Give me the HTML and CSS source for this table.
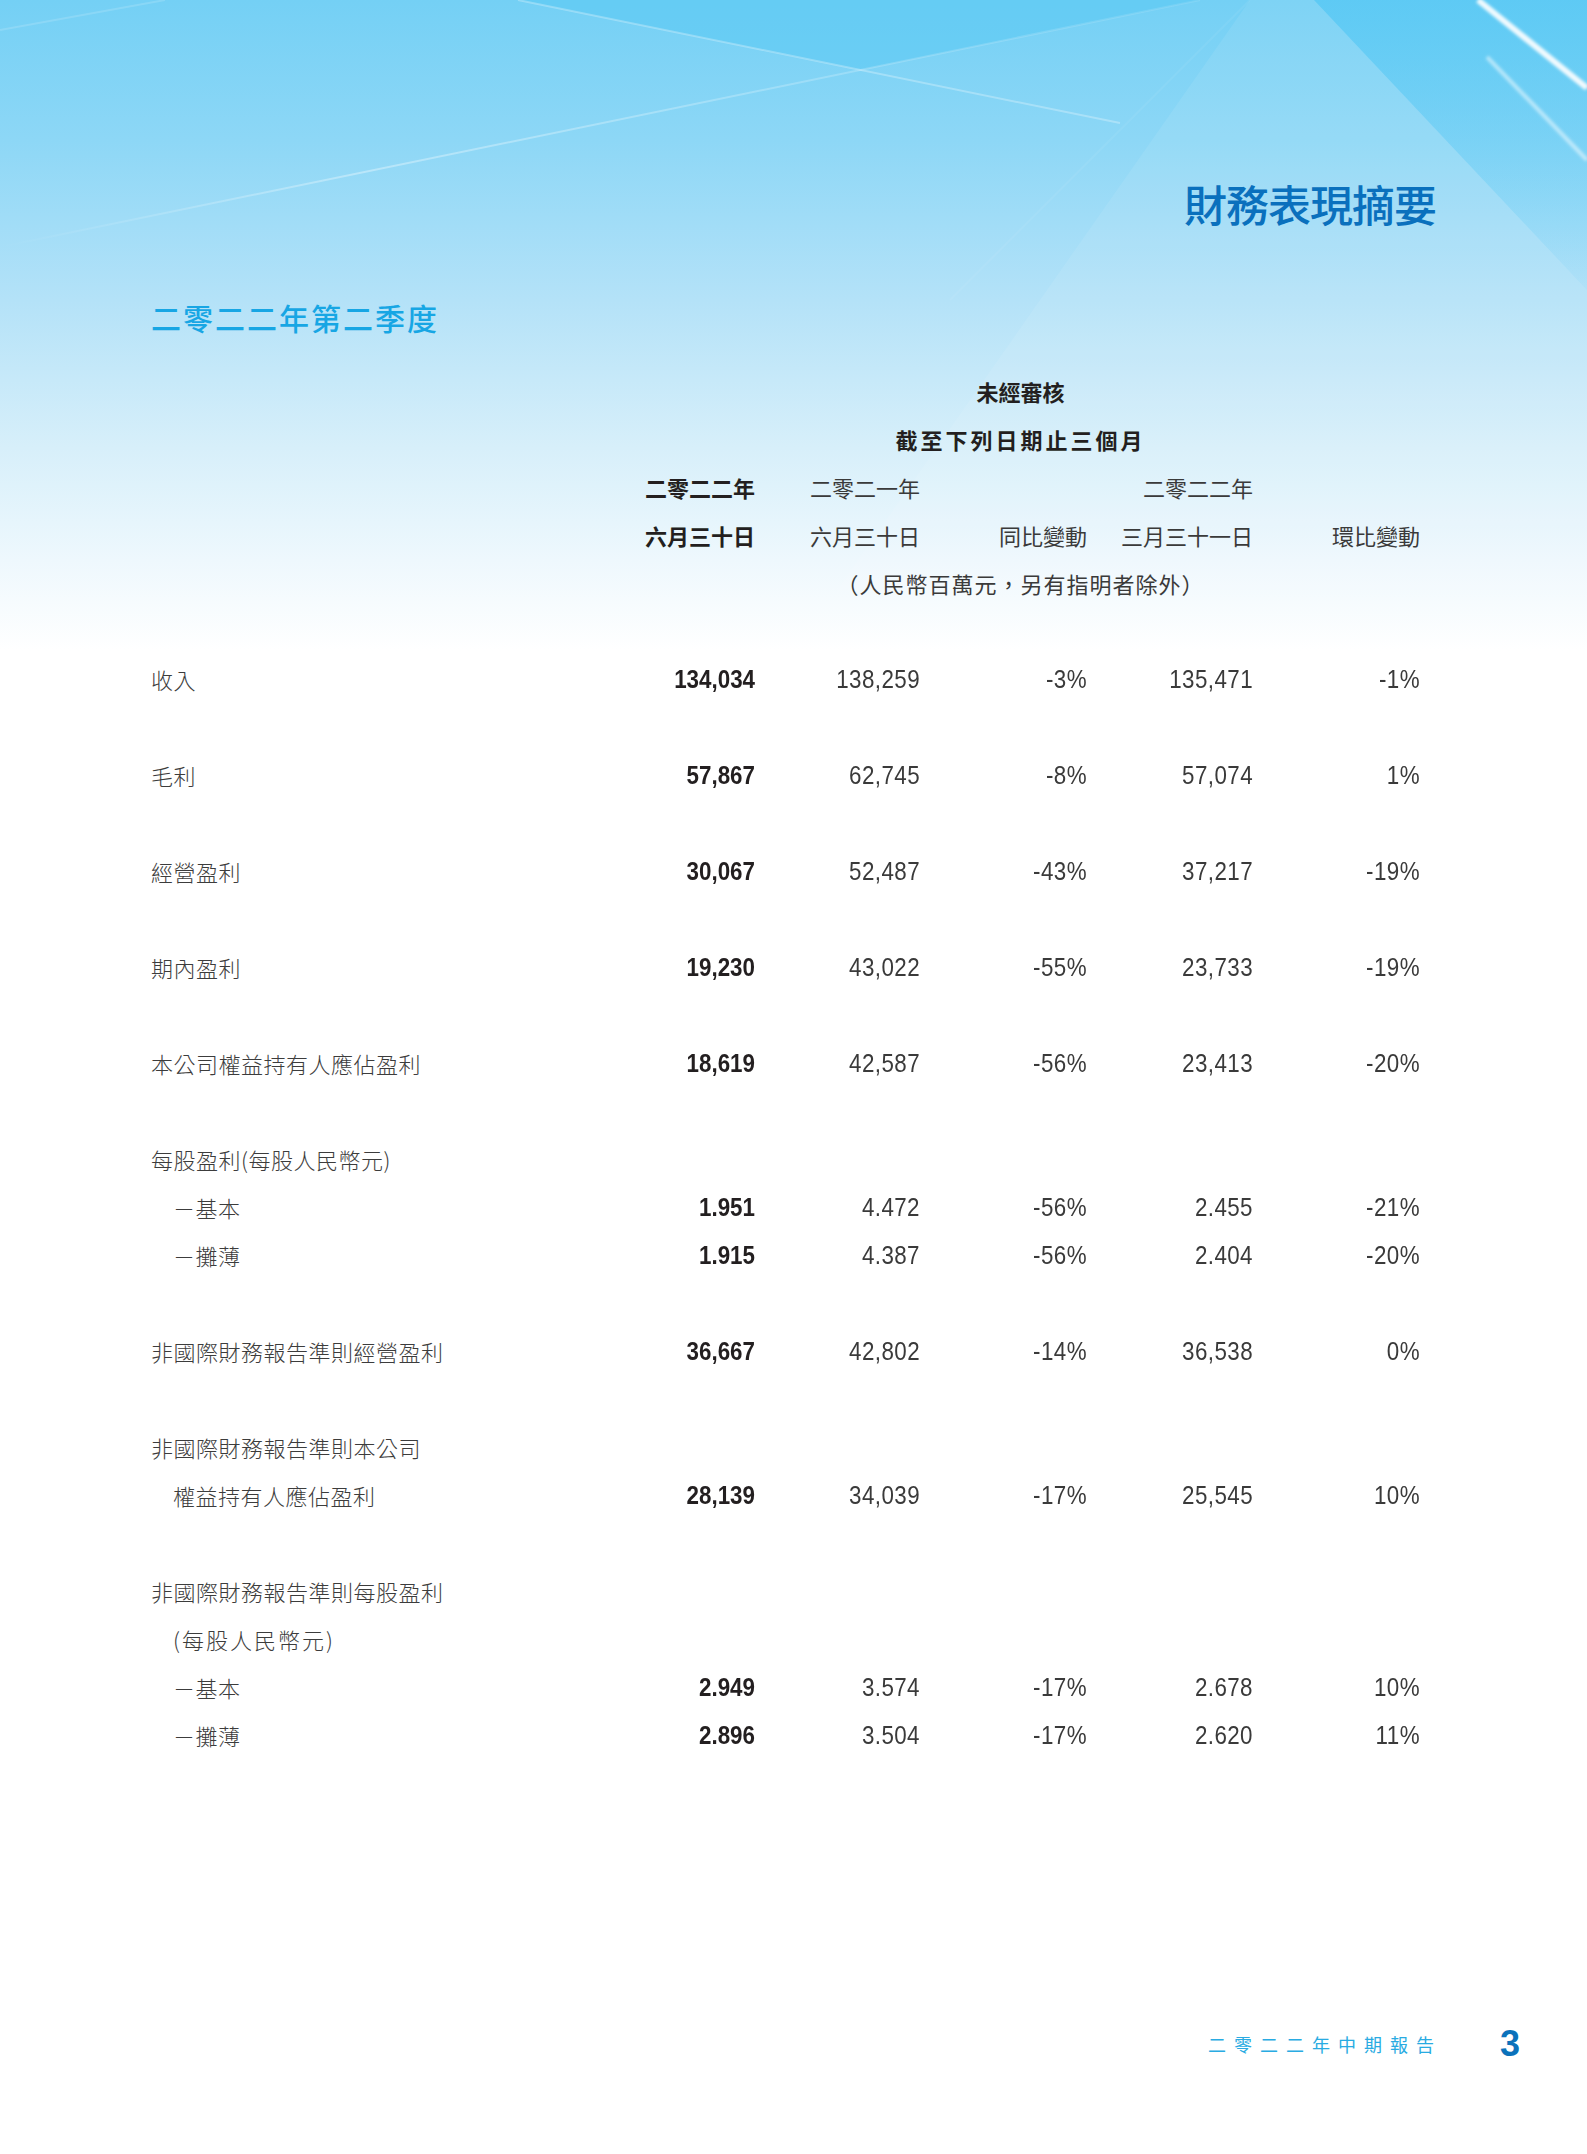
FILE: index.html
```html
<!DOCTYPE html>
<html lang="zh-Hant">
<head>
<meta charset="utf-8">
<title>財務表現摘要</title>
<link rel="stylesheet" href="styles.css">
</head>
<body>
<div class="page">
  <header class="head">
    <h1 class="title">財務表現摘要</h1>
    <h2 class="subtitle">二零二二年第二季度</h2>
  </header>

  <section class="table">
    <div class="row"><div class="span-head strong">未經審核</div></div>
    <div class="row"><div class="span-head strong wide">截至下列日期止三個月</div></div>
    <div class="row">
      <div></div><div class="hd strong">二零二二年</div><div class="hd">二零二一年</div><div></div><div class="hd">二零二二年</div><div></div>
    </div>
    <div class="row">
      <div></div><div class="hd strong">六月三十日</div><div class="hd">六月三十日</div><div class="hd">同比變動</div><div class="hd">三月三十一日</div><div class="hd">環比變動</div>
    </div>
    <div class="row"><div class="span-head unit">（人民幣百萬元，另有指明者除外）</div></div>
    <div class="gap"></div>

    <div class="row"><div class="lbl">收入</div><div class="num b">134,034</div><div class="num">138,259</div><div class="num">-3%</div><div class="num">135,471</div><div class="num">-1%</div></div>
    <div class="gap"></div>
    <div class="row"><div class="lbl">毛利</div><div class="num b">57,867</div><div class="num">62,745</div><div class="num">-8%</div><div class="num">57,074</div><div class="num">1%</div></div>
    <div class="gap"></div>
    <div class="row"><div class="lbl">經營盈利</div><div class="num b">30,067</div><div class="num">52,487</div><div class="num">-43%</div><div class="num">37,217</div><div class="num">-19%</div></div>
    <div class="gap"></div>
    <div class="row"><div class="lbl">期內盈利</div><div class="num b">19,230</div><div class="num">43,022</div><div class="num">-55%</div><div class="num">23,733</div><div class="num">-19%</div></div>
    <div class="gap"></div>
    <div class="row"><div class="lbl">本公司權益持有人應佔盈利</div><div class="num b">18,619</div><div class="num">42,587</div><div class="num">-56%</div><div class="num">23,413</div><div class="num">-20%</div></div>
    <div class="gap"></div>
    <div class="row"><div class="lbl full">每股盈利(每股人民幣元)</div></div>
    <div class="row"><div class="lbl sub">－基本</div><div class="num b">1.951</div><div class="num">4.472</div><div class="num">-56%</div><div class="num">2.455</div><div class="num">-21%</div></div>
    <div class="row"><div class="lbl sub">－攤薄</div><div class="num b">1.915</div><div class="num">4.387</div><div class="num">-56%</div><div class="num">2.404</div><div class="num">-20%</div></div>
    <div class="gap"></div>
    <div class="row"><div class="lbl">非國際財務報告準則經營盈利</div><div class="num b">36,667</div><div class="num">42,802</div><div class="num">-14%</div><div class="num">36,538</div><div class="num">0%</div></div>
    <div class="gap"></div>
    <div class="row"><div class="lbl full">非國際財務報告準則本公司</div></div>
    <div class="row"><div class="lbl sub">權益持有人應佔盈利</div><div class="num b">28,139</div><div class="num">34,039</div><div class="num">-17%</div><div class="num">25,545</div><div class="num">10%</div></div>
    <div class="gap"></div>
    <div class="row"><div class="lbl full">非國際財務報告準則每股盈利</div></div>
    <div class="row"><div class="lbl full sub paren">(每股人民幣元)</div></div>
    <div class="row"><div class="lbl sub">－基本</div><div class="num b">2.949</div><div class="num">3.574</div><div class="num">-17%</div><div class="num">2.678</div><div class="num">10%</div></div>
    <div class="row"><div class="lbl sub">－攤薄</div><div class="num b">2.896</div><div class="num">3.504</div><div class="num">-17%</div><div class="num">2.620</div><div class="num">11%</div></div>
  </section>

  <footer class="foot">
    <span class="foot-text">二零二二年中期報告</span>
    <span class="page-num">3</span>
  </footer>
</div>
</body>
</html>
```

FILE: styles.css
```css
html, body {
  margin: 0;
  padding: 0;
  background: #ffffff;
}

.page {
  width: 1587px;
  height: 2154px;
  overflow: hidden;
  font-family: "Noto Sans CJK TC", "Noto Sans CJK SC", sans-serif;
  color: #3a3a3a;
  background-color: #ffffff;
  background-image: url("data:image/svg+xml,%3Csvg xmlns='http://www.w3.org/2000/svg' width='1587' height='700' viewBox='0 0 1587 700'%3E%3Cdefs%3E%3ClinearGradient id='g' x1='0' y1='0' x2='0' y2='1'%3E%3Cstop offset='0' stop-color='%2374d0f5'/%3E%3Cstop offset='0.2' stop-color='%238dd7f6'/%3E%3Cstop offset='0.43' stop-color='%23b4e2f8'/%3E%3Cstop offset='0.64' stop-color='%23d7effa'/%3E%3Cstop offset='0.8' stop-color='%23eef8fd'/%3E%3Cstop offset='0.93' stop-color='%23ffffff'/%3E%3C/linearGradient%3E%3ClinearGradient id='d' x1='0' y1='0' x2='0' y2='1'%3E%3Cstop offset='0' stop-color='%234fc6f4' stop-opacity='.6'/%3E%3Cstop offset='1' stop-color='%234fc6f4' stop-opacity='0'/%3E%3C/linearGradient%3E%3ClinearGradient id='w' x1='0' y1='0' x2='1' y2='0'%3E%3Cstop offset='0' stop-color='%23ffffff' stop-opacity='0'/%3E%3Cstop offset='.3' stop-color='%23ffffff' stop-opacity='.35'/%3E%3Cstop offset='1' stop-color='%23ffffff' stop-opacity='.1'/%3E%3C/linearGradient%3E%3Cfilter id='b' x='-20%25' y='-20%25' width='140%25' height='140%25'%3E%3CfeGaussianBlur stdDeviation='1.6'/%3E%3C/filter%3E%3C/defs%3E%3Crect width='1587' height='700' fill='url(%23g)'/%3E%3Cpolygon points='518,0 1200,0 860,70' fill='%2356c8f4' opacity='.5'/%3E%3Cpolygon points='1314,0 1587,0 1587,290' fill='url(%23d)'/%3E%3Cpolygon points='1250,0 1314,0 1587,290 1587,700 760,700' fill='%23ffffff' opacity='.08'/%3E%3Cg fill='none' stroke='%23ffffff'%3E%3Cline x1='518' y1='0' x2='1120' y2='123' stroke-opacity='.28' stroke-width='2'/%3E%3Cline x1='1200' y1='0' x2='0' y2='247' stroke='url(%23w)' stroke-width='2'/%3E%3Cline x1='0' y1='30' x2='165' y2='0' stroke-opacity='.15' stroke-width='2'/%3E%3Cline x1='1250' y1='0' x2='950' y2='300' stroke-opacity='.06' stroke-width='2'/%3E%3Cline x1='1478' y1='0' x2='1587' y2='88' stroke-opacity='.9' stroke-width='6' filter='url(%23b)'/%3E%3Cline x1='1487' y1='57' x2='1587' y2='160' stroke-opacity='.5' stroke-width='4' filter='url(%23b)'/%3E%3C/g%3E%3C/svg%3E");
  background-repeat: no-repeat;
  background-position: 0 0;
  background-size: 1587px 700px;
}

/* ---------- heading ---------- */
.head {
  padding: 178px 151px 0;
}

.title {
  margin: 0;
  text-align: right;
  font-size: 43px;
  line-height: 50px;
  font-weight: 500;
  letter-spacing: -1px;
  color: #0a70bd;
}

.subtitle {
  margin: 69px 0 0;
  font-size: 30px;
  line-height: 40px;
  font-weight: 500;
  letter-spacing: 2px;
  color: #17a6e4;
}

/* ---------- table ---------- */
.table {
  margin-top: 30px;
}

.row {
  display: grid;
  grid-template-columns: 434px 170px 165px 167px 166px 167px;
  padding-left: 151px;
  height: 48px;
  line-height: 48px;
  font-size: 22px;
  white-space: nowrap;
}

.gap {
  height: 48px;
}

.span-head {
  grid-column: 2 / 7;
  text-align: center;
  padding-left: 36px;
}

.span-head.wide {
  letter-spacing: 3px;
}

.span-head.unit {
  color: #3a3a3a;
  letter-spacing: 1px;
}

.hd {
  text-align: right;
  color: #3a3a3a;
}

.strong {
  font-weight: 700;
  color: #231f20;
}

.lbl {
  font-weight: 300;
  color: #3c3c3c;
  letter-spacing: 0.5px;
}

.lbl.full {
  grid-column: 1 / 7;
}

.lbl.sub {
  padding-left: 22px;
}

.lbl.paren {
  letter-spacing: 2px;
}

.num {
  text-align: right;
  font-family: "Liberation Sans", Arial, sans-serif;
  font-size: 26px;
  letter-spacing: 0.5px;
  color: #3a3a3a;
  transform: scaleX(0.86);
  transform-origin: 100% 50%;
}

.num.b {
  font-weight: 700;
  letter-spacing: 0;
  color: #231f20;
}

/* ---------- footer ---------- */
.foot {
  display: flex;
  justify-content: flex-end;
  align-items: center;
  gap: 58px;
  margin-top: 265px;
  padding-right: 67px;
  height: 40px;
}

.foot-text {
  font-size: 18px;
  letter-spacing: 8px;
  color: #29abe2;
}

.page-num {
  font-family: "Liberation Sans", Arial, sans-serif;
  font-weight: 700;
  font-size: 36px;
  line-height: 40px;
  color: #0b72bb;
}
```
